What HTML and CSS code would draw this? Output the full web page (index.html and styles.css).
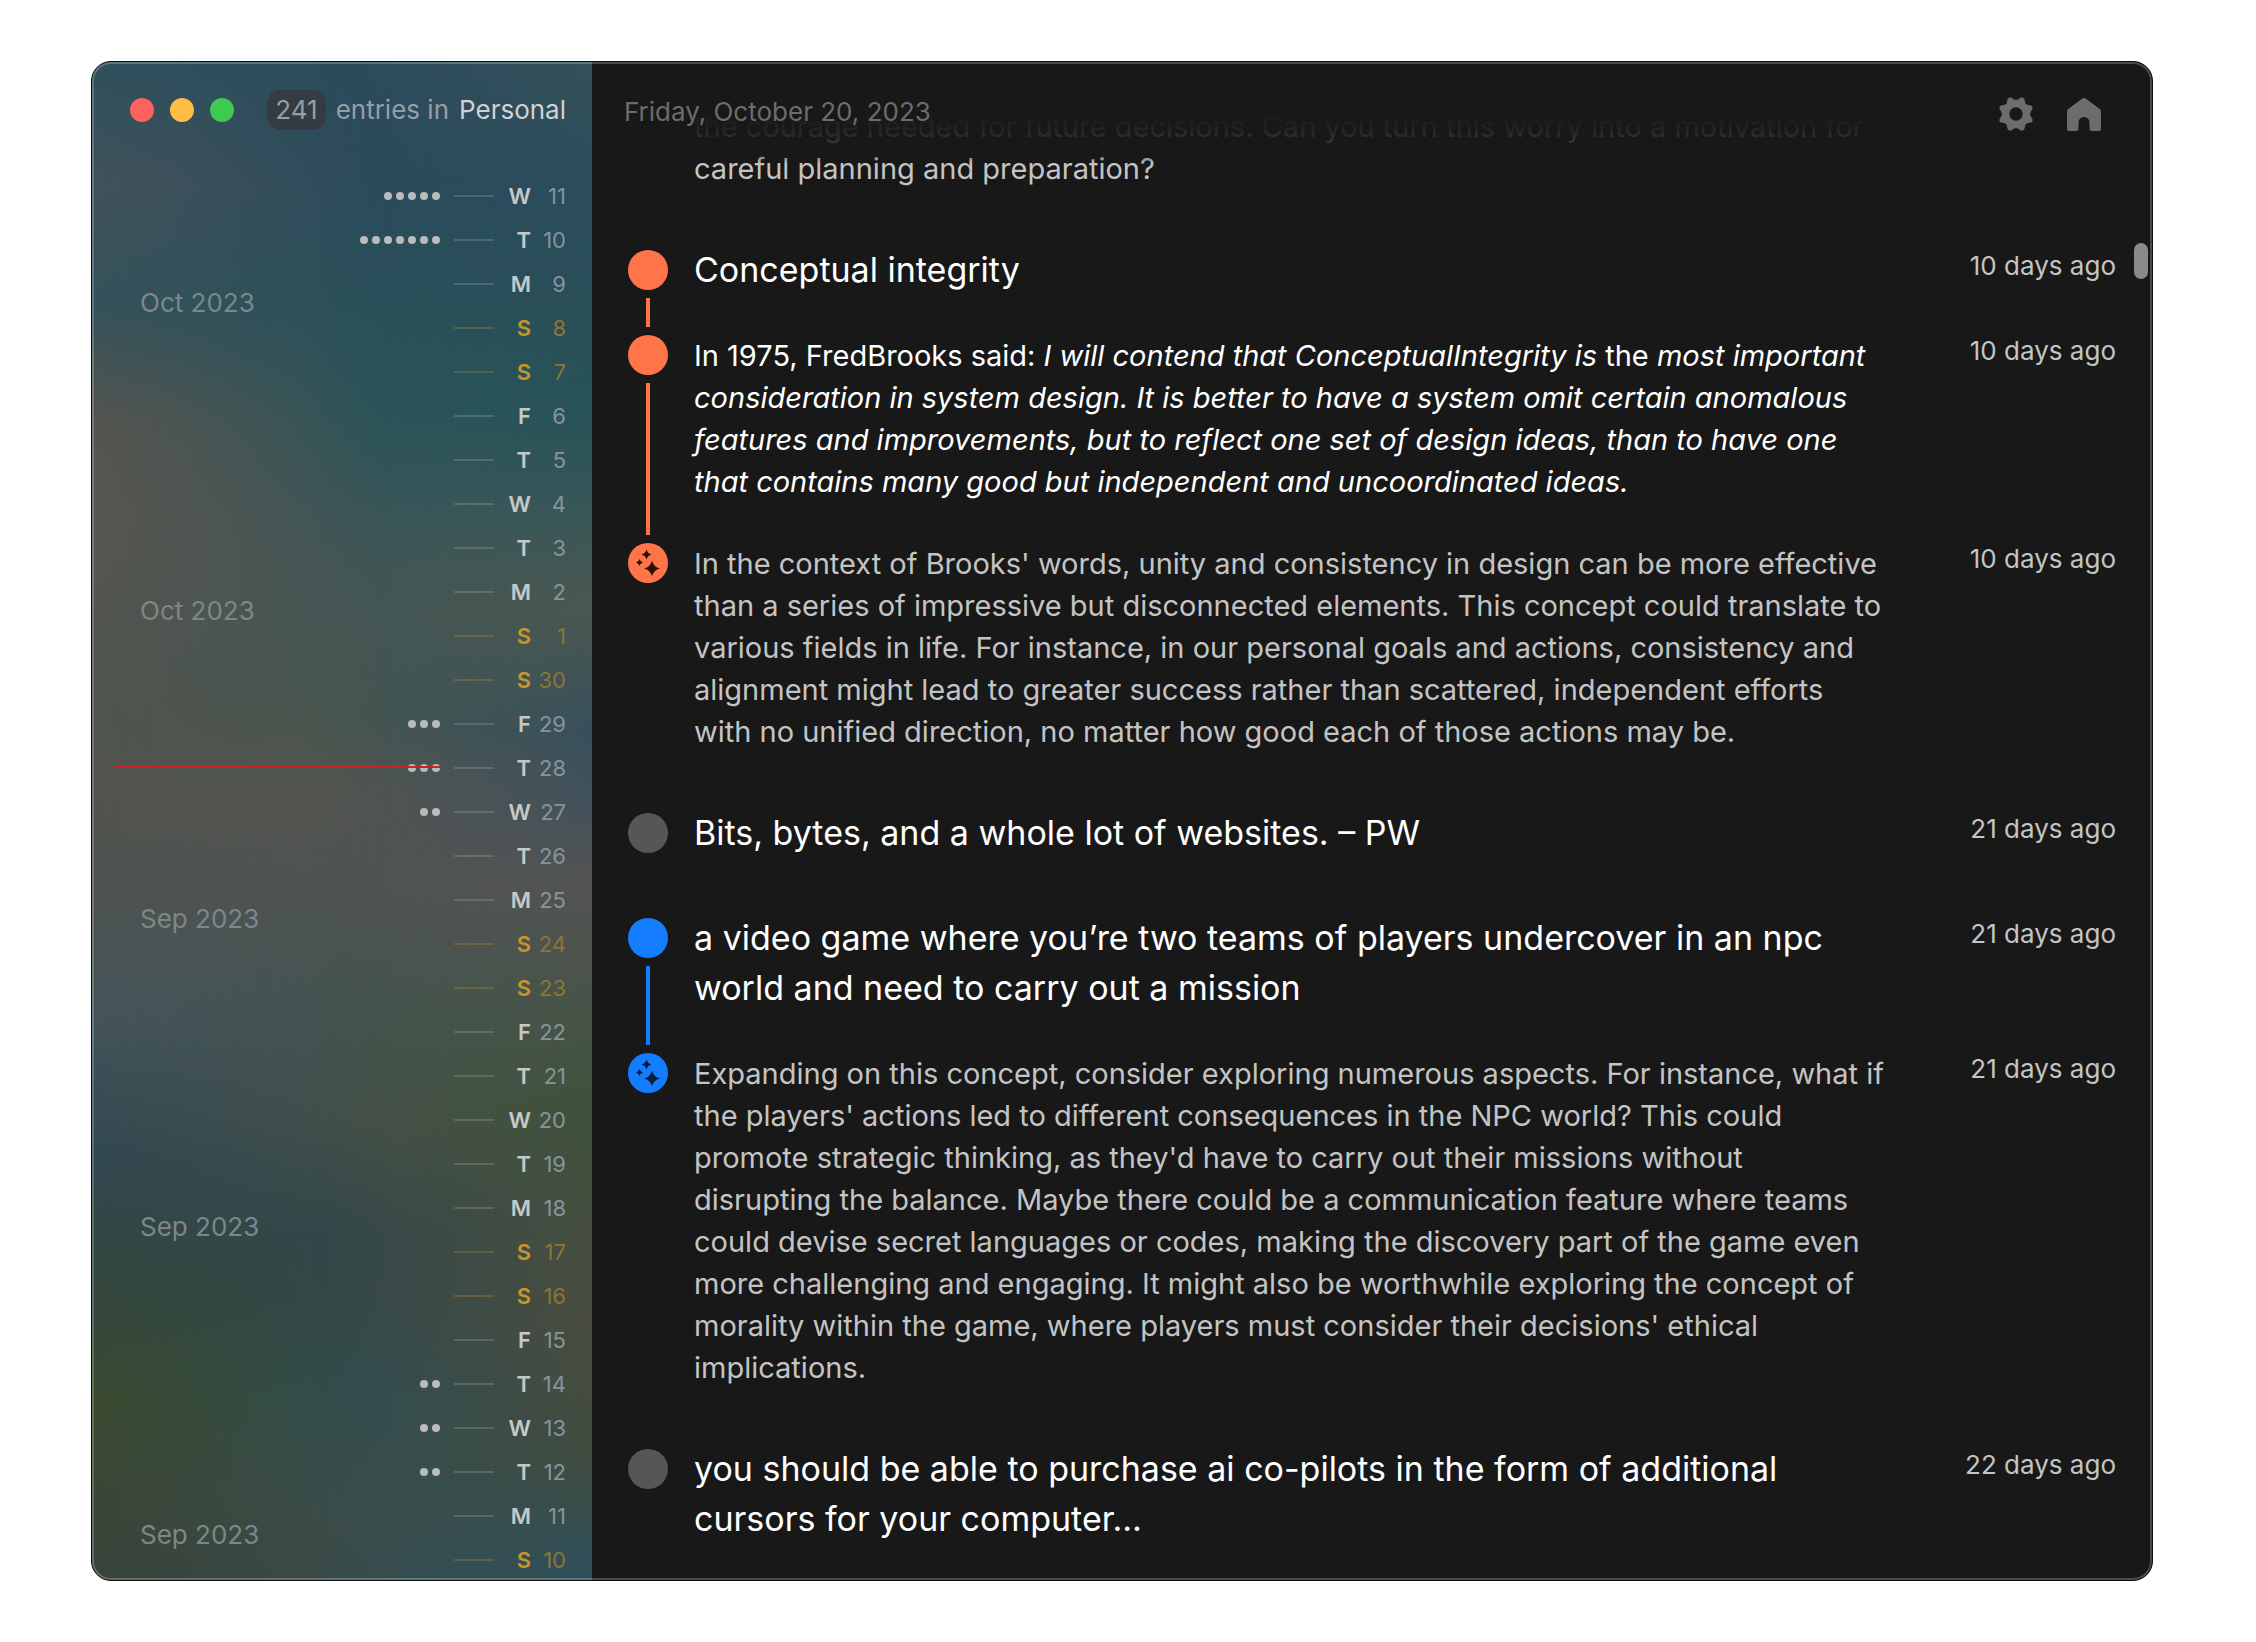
FILE: index.html
```html
<!DOCTYPE html>
<html lang="en">
<head>
<meta charset="utf-8">
<meta name="viewport" content="width=device-width, initial-scale=1">
<title>Personal</title>
<link rel="stylesheet" href="styles.css">
</head>
<body>
<svg class="defs" aria-hidden="true">
  <symbol id="sparkles" viewBox="0 0 40 40">
    <path d="M24 17.500Q25.500 24 32 25.500Q25.500 27 24 33.500Q22.500 27 16 25.500Q22.500 24 24 17.500Z"/>
    <path d="M18.500 6.500Q19.500 10.500 23.500 11.500Q19.500 12.500 18.500 16.500Q17.500 12.500 13.500 11.500Q17.500 10.500 18.500 6.500Z"/>
    <path d="M11.500 16Q12.200 18.800 15 19.500Q12.200 20.200 11.500 23Q10.800 20.200 8 19.500Q10.800 18.800 11.500 16Z"/>
  </symbol>
</svg>
<div class="window">
  <aside class="sidebar">
    <header class="titlebar">
      <div class="lights">
        <button class="light close" aria-label="Close"></button>
        <button class="light minimize" aria-label="Minimize"></button>
        <button class="light zoom" aria-label="Zoom"></button>
      </div>
      <p class="summary"><span class="count">241</span><span>entries in</span><strong>Personal</strong></p>
    </header>
    <div class="calendar">
      <ol class="months">
        <li>Oct 2023</li><li>Oct 2023</li><li>Sep 2023</li><li>Sep 2023</li><li>Sep 2023</li>
      </ol>
      <ol class="days">
        <li><span class="dots"><i></i><i></i><i></i><i></i><i></i></span><b>W</b><span class="num">11</span></li>
        <li><span class="dots"><i></i><i></i><i></i><i></i><i></i><i></i><i></i></span><b>T</b><span class="num">10</span></li>
        <li><span class="dots"></span><b>M</b><span class="num">9</span></li>
        <li class="weekend"><span class="dots"></span><b>S</b><span class="num">8</span></li>
        <li class="weekend"><span class="dots"></span><b>S</b><span class="num">7</span></li>
        <li><span class="dots"></span><b>F</b><span class="num">6</span></li>
        <li><span class="dots"></span><b>T</b><span class="num">5</span></li>
        <li><span class="dots"></span><b>W</b><span class="num">4</span></li>
        <li><span class="dots"></span><b>T</b><span class="num">3</span></li>
        <li><span class="dots"></span><b>M</b><span class="num">2</span></li>
        <li class="weekend"><span class="dots"></span><b>S</b><span class="num">1</span></li>
        <li class="weekend"><span class="dots"></span><b>S</b><span class="num">30</span></li>
        <li><span class="dots"><i></i><i></i><i></i></span><b>F</b><span class="num">29</span></li>
        <li class="current"><span class="dots"><i></i><i></i><i></i></span><b>T</b><span class="num">28</span></li>
        <li><span class="dots"><i></i><i></i></span><b>W</b><span class="num">27</span></li>
        <li><span class="dots"></span><b>T</b><span class="num">26</span></li>
        <li><span class="dots"></span><b>M</b><span class="num">25</span></li>
        <li class="weekend"><span class="dots"></span><b>S</b><span class="num">24</span></li>
        <li class="weekend"><span class="dots"></span><b>S</b><span class="num">23</span></li>
        <li><span class="dots"></span><b>F</b><span class="num">22</span></li>
        <li><span class="dots"></span><b>T</b><span class="num">21</span></li>
        <li><span class="dots"></span><b>W</b><span class="num">20</span></li>
        <li><span class="dots"></span><b>T</b><span class="num">19</span></li>
        <li><span class="dots"></span><b>M</b><span class="num">18</span></li>
        <li class="weekend"><span class="dots"></span><b>S</b><span class="num">17</span></li>
        <li class="weekend"><span class="dots"></span><b>S</b><span class="num">16</span></li>
        <li><span class="dots"></span><b>F</b><span class="num">15</span></li>
        <li><span class="dots"><i></i><i></i></span><b>T</b><span class="num">14</span></li>
        <li><span class="dots"><i></i><i></i></span><b>W</b><span class="num">13</span></li>
        <li><span class="dots"><i></i><i></i></span><b>T</b><span class="num">12</span></li>
        <li><span class="dots"></span><b>M</b><span class="num">11</span></li>
        <li class="weekend"><span class="dots"></span><b>S</b><span class="num">10</span></li>
      </ol>
    </div>
  </aside>
  <main class="content">
    <header class="toolbar">
      <time datetime="2023-10-20">Friday, October 20, 2023</time>
      <div class="actions">
        <button class="tool" aria-label="Settings">
          <svg viewBox="0 0 34 34"><path fill-rule="evenodd" d="M8.500 2.200C9 .6 10.500 .1 12 .6L15.300 2.500Q17 3.300 18.700 2.500L22 .6C23.500 .1 25 .6 25.500 2.200L26.200 5.800Q26.900 7.300 28.400 7.800L31.800 8.500C33.400 9 34 10.500 33.400 12L31.500 15.300Q30.700 17 31.500 18.700L33.400 22C34 23.500 33.400 25 31.800 25.500L28.400 26.200Q26.900 26.700 26.200 28.200L25.500 31.800C25 33.400 23.500 34 22 33.400L18.700 31.500Q17 30.700 15.300 31.500L12 33.400C10.500 34 9 33.400 8.500 31.800L7.800 28.200Q7.100 26.700 5.600 26.200L2.200 25.500C.6 25 0 23.500 .6 22L2.500 18.700Q3.300 17 2.500 15.300L.6 12C0 10.500 .6 9 2.200 8.500L5.600 7.800Q7.100 7.300 7.800 5.800ZM17 10.300a6.700 6.700 0 1 0 0 13.400a6.700 6.700 0 1 0 0-13.400Z"/></svg>
        </button>
        <button class="tool" aria-label="Home">
          <svg viewBox="0 0 34 34"><path d="M15 1.700Q17 .2 19 1.700L33 12.300Q34 13.200 34 14.500V31.500Q34 34 31.500 34H24.500Q22.500 34 22.500 32V25.500A5.500 5.500 0 0 0 11.500 25.500V32Q11.500 34 9.500 34H2.500Q0 34 0 31.500V14.500Q0 13.200 1 12.300Z"/></svg>
        </button>
      </div>
    </header>
    <div class="feed">
      <section class="thread">
        <article class="entry">
          <div class="rail"></div>
          <p class="text">initially. Perhaps reflecting on past experiences and learning from them can provide<br>the courage needed for future decisions. Can you turn this worry into a motivation for<br>careful planning and preparation?</p>
        </article>
      </section>
      <section class="thread orange">
        <article class="entry headline">
          <div class="rail"><span class="marker"></span></div>
          <h2 class="text">Conceptual integrity</h2>
          <time>10 days ago</time>
        </article>
        <article class="entry note">
          <div class="rail"><span class="marker"></span></div>
          <p class="text">In 1975, FredBrooks said: <em>I will contend that ConceptualIntegrity is</em> the <em>most important<br>consideration in system design. It is better to have a system omit certain anomalous<br>features and improvements, but to reflect one set of design ideas, than to have one<br>that contains many good but independent and uncoordinated ideas.</em></p>
          <time>10 days ago</time>
        </article>
        <article class="entry">
          <div class="rail"><span class="marker"><svg><use href="#sparkles"/></svg></span></div>
          <p class="text">In the context of Brooks' words, unity and consistency in design can be more effective<br>than a series of impressive but disconnected elements. This concept could translate to<br>various fields in life. For instance, in our personal goals and actions, consistency and<br>alignment might lead to greater success rather than scattered, independent efforts<br>with no unified direction, no matter how good each of those actions may be.</p>
          <time>10 days ago</time>
        </article>
      </section>
      <section class="thread">
        <article class="entry headline">
          <div class="rail"><span class="marker"></span></div>
          <h2 class="text">Bits, bytes, and a whole lot of websites. – PW</h2>
          <time>21 days ago</time>
        </article>
      </section>
      <section class="thread blue">
        <article class="entry headline">
          <div class="rail"><span class="marker"></span></div>
          <h2 class="text">a video game where you’re two teams of players undercover in an npc<br>world and need to carry out a mission</h2>
          <time>21 days ago</time>
        </article>
        <article class="entry">
          <div class="rail"><span class="marker"><svg><use href="#sparkles"/></svg></span></div>
          <p class="text">Expanding on this concept, consider exploring numerous aspects. For instance, what if<br>the players' actions led to different consequences in the NPC world? This could<br>promote strategic thinking, as they'd have to carry out their missions without<br>disrupting the balance. Maybe there could be a communication feature where teams<br>could devise secret languages or codes, making the discovery part of the game even<br>more challenging and engaging. It might also be worthwhile exploring the concept of<br>morality within the game, where players must consider their decisions' ethical<br>implications.</p>
          <time>21 days ago</time>
        </article>
      </section>
      <section class="thread">
        <article class="entry headline">
          <div class="rail"><span class="marker"></span></div>
          <h2 class="text">you should be able to purchase ai co-pilots in the form of additional<br>cursors for your computer…</h2>
          <time>22 days ago</time>
        </article>
      </section>
    </div>
    <div class="scroll-thumb"></div>
  </main>
</div>
</body>
</html>
```
FILE: styles.css
```css
* { box-sizing: border-box; }

body {
  margin: 0;
  height: 100vh;
  padding: 61px 103px 61px 91px;
  background: #fff;
  color: #fff;
  font: 26px/32px Inter, "Liberation Sans", sans-serif;
}

h2, p, ol { margin: 0; padding: 0; font-weight: 400; }
ol { list-style: none; }
button { padding: 0; border: 0; background: none; }
.defs { position: absolute; width: 0; height: 0; }

.window {
  position: relative;
  display: flex;
  height: 100%;
  border: 1px solid #0a0e10;
  border-radius: 20px;
  background: #181818;
  overflow: hidden;
}

/* light hairline just inside the dark edge */
.window::after {
  content: "";
  position: absolute;
  inset: 0;
  z-index: 2;
  border: 2px solid rgba(255, 255, 255, .22);
  border-radius: 19px;
  pointer-events: none;
}

.sidebar {
  position: relative;
  isolation: isolate;
  flex: none;
  width: 500px;
  background: linear-gradient(#2b4a5c 0, #2b4a5c 6%, #2a515a 17%, #2d555a 24%, #3f5658 32%, #46574f 43%, #545550 48%, #4d5453 56%, #43544e 63%, #46514a 70%, #33484b 77%, #33494c 82%, #2f4e54 88%, #3c4f4e 96%, #3a4d4b 100%);
}

.sidebar::before,
.sidebar::after {
  content: "";
  position: absolute;
  inset: 0;
  z-index: -1;
}

.sidebar::before {
  background: linear-gradient(#2e505c 0, #42525a 8%, #35525a 16%, #55554f 24%, #57564f 30%, #50544f 40%, #51534e 50%, #4a5354 58%, #44545a 63%, #324850 72%, #33463e 80%, #3a4a30 88%, #3a4736 94%, #38433a 100%);
  mask-image: linear-gradient(90deg, #000, rgba(0, 0, 0, .75) 18%, transparent 60%);
}

.sidebar::after {
  background: linear-gradient(#34515a 0, #2b4c5c 9%, #2a4f58 16%, #275358 23%, #395757 30%, #4b5750 36%, #38505c 44%, #43525a 49%, #535353 54%, #475447 63%, #3f523a 69%, #474f40 77%, #4a4d3f 83%, #404c40 92%, #2f4f58 99%);
  mask-image: linear-gradient(270deg, #000, rgba(0, 0, 0, .75) 12%, transparent 55%);
}

.titlebar {
  display: flex;
  align-items: center;
  justify-content: space-between;
  height: 96px;
  padding: 0 26px 0 38px;
}

.lights { display: flex; gap: 16px; }
.light { width: 24px; height: 24px; border-radius: 50%; }
.close { background: #ff625c; }
.minimize { background: #ffbd44; }
.zoom { background: #3fc950; }

.summary { display: flex; align-items: center; gap: 10px; color: #959fa6; }
.summary strong { color: #d0d1d2; font-weight: 400; }
.count { padding: 4px 8px; border-radius: 14px; background: #343b42; }

.calendar { display: flex; padding: 16px 26px 0 48px; }
.months { flex: 1; padding-top: 113px; color: #7c8888; }
.months li { height: 308px; }

.days { font-size: 22px; }
.days li {
  position: relative;
  display: flex;
  align-items: center;
  justify-content: flex-end;
  height: 44px;
}
.dots { display: flex; gap: 4px; margin-right: 14px; }
.dots i { width: 8px; height: 8px; border-radius: 50%; background: #b9bbbc; }
.days b {
  display: flex;
  align-items: center;
  justify-content: space-between;
  width: 77px;
  color: #c6c8c8;
  font-weight: 600;
}
.days b::before {
  content: "";
  width: 40px;
  height: 2px;
  background: rgba(255, 255, 255, .15);
}
.num { width: 35px; color: #87949a; text-align: right; }
.weekend b { color: #c9942a; }
.weekend .num { color: #8c7439; }
.weekend b::before { background: rgba(201, 148, 42, .27); }

.current::before {
  content: "";
  position: absolute;
  top: 20px;
  right: 126px;
  width: 327px;
  height: 2px;
  background: #cf2026;
}

.content { position: relative; flex: 1; min-width: 0; }

.toolbar {
  position: absolute;
  inset: 0 0 auto;
  z-index: 1;
  display: flex;
  justify-content: space-between;
  align-items: flex-start;
  height: 104px;
  padding: 34px 51px 0 32px;
  color: #6c6c6c;
  background: linear-gradient(#181818 0, #181818 50px, rgba(24, 24, 24, .94) 66px, rgba(24, 24, 24, .82) 82px, rgba(24, 24, 24, .5) 92px, rgba(24, 24, 24, 0) 102px);
}

.actions { display: flex; gap: 34px; }
.tool { width: 34px; height: 34px; margin-top: 1px; }
.tool svg { display: block; width: 34px; height: 34px; fill: #6c6c6c; }

.feed {
  display: flex;
  flex-direction: column;
  gap: 55px;
  height: 100%;
  padding: 2px 36px 0 36px;
  overflow: hidden;
}

.entry {
  display: grid;
  grid-template-columns: 40px minmax(0, 1fr) auto;
  column-gap: 26px;
}

.text {
  color: #c4c4c4;
  font-size: 29px;
  line-height: 42px;
  white-space: nowrap;
}
.entry:not(:last-child) .text { padding-bottom: 40px; }
.entry > time { color: #c4c4c4; }

.note .text { color: #fff; }
.headline .text { color: #fff; font-size: 34px; line-height: 50px; }
.headline > .rail, .headline > time { padding-top: 5px; }

.rail { display: flex; flex-direction: column; align-items: center; gap: 8px; }
.marker {
  display: block;
  width: 40px;
  height: 40px;
  border-radius: 50%;
  background: #565656;
}
.marker svg { display: block; width: 40px; height: 40px; fill: #2c1006; }
.entry:not(:last-child) .rail::after {
  content: "";
  flex: 1;
  width: 4px;
  margin-bottom: 8px;
  background: #565656;
}

.orange .marker, .orange .entry .rail::after { background: #ff7449; }
.blue .marker, .blue .entry .rail::after { background: #147dff; }
.blue .marker svg { fill: #06203f; }

.scroll-thumb {
  position: absolute;
  top: 181px;
  right: 4px;
  width: 14px;
  height: 36px;
  border-radius: 7px;
  background: #8a8a8a;
}
```
